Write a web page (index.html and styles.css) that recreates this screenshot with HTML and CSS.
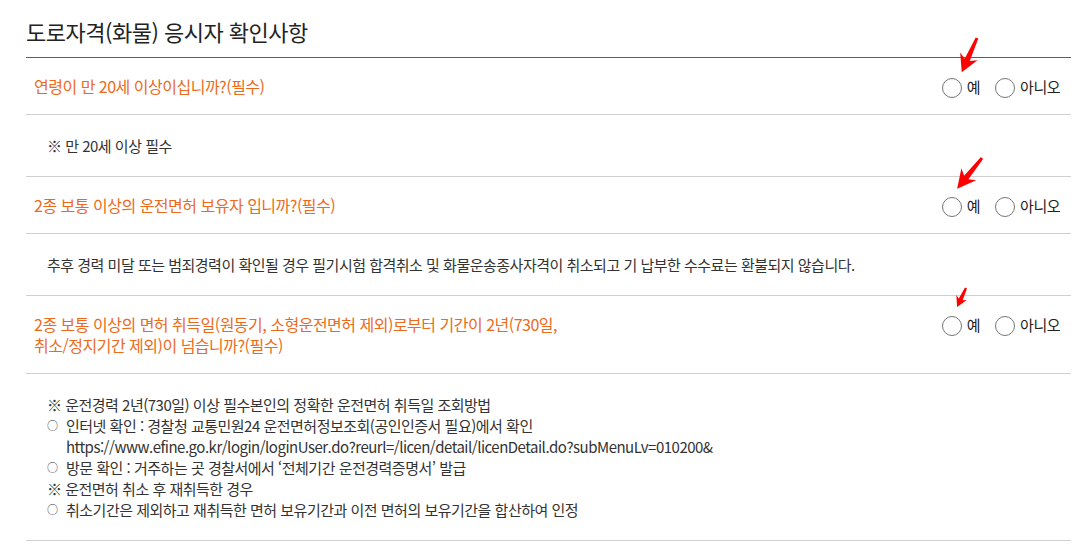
FILE: index.html
```html
<!DOCTYPE html>
<html lang="ko">
<head>
<meta charset="utf-8">
<title>도로자격(화물) 응시자 확인사항</title>
<link rel="stylesheet" href="styles.css">
</head>
<body>
<div class="page">
  <h2 class="title">도로자격(화물) 응시자 확인사항</h2>

  <div class="q-row">
    <p class="q-text">연령이 만 20세 이상이십니까?(필수)</p>
    <div class="choices">
      <label class="choice"><input type="radio" name="q1"><span>예</span></label>
      <label class="choice"><input type="radio" name="q1"><span>아니오</span></label>
    </div>
  </div>
  <div class="note">
    <p>※ 만 20세 이상 필수</p>
  </div>

  <div class="q-row">
    <p class="q-text">2종 보통 이상의 운전면허 보유자 입니까?(필수)</p>
    <div class="choices">
      <label class="choice"><input type="radio" name="q2"><span>예</span></label>
      <label class="choice"><input type="radio" name="q2"><span>아니오</span></label>
    </div>
  </div>
  <div class="note">
    <p>추후 경력 미달 또는 범죄경력이 확인될 경우 필기시험 합격취소 및 화물운송종사자격이 취소되고 기 납부한 수수료는 환불되지 않습니다.</p>
  </div>

  <div class="q-row">
    <p class="q-text">2종 보통 이상의 면허 취득일(원동기, 소형운전면허 제외)로부터 기간이 2년(730일,<br>취소/정지기간 제외)이 넘습니까?(필수)</p>
    <div class="choices">
      <label class="choice"><input type="radio" name="q3"><span>예</span></label>
      <label class="choice"><input type="radio" name="q3"><span>아니오</span></label>
    </div>
  </div>
  <div class="note">
    <p>※ 운전경력 2년(730일) 이상 필수본인의 정확한 운전면허 취득일 조회방법</p>
    <p class="sub"><span class="dot">○</span><span>인터넷 확인 : 경찰청 교통민원24 운전면허정보조회(공인인증서 필요)에서 확인<br>https://www.efine.go.kr/login/loginUser.do?reurl=/licen/detail/licenDetail.do?subMenuLv=010200&amp;</span></p>
    <p class="sub"><span class="dot">○</span><span>방문 확인 : 거주하는 곳 경찰서에서 ‘전체기간 운전경력증명서’ 발급</span></p>
    <p>※ 운전면허 취소 후 재취득한 경우</p>
    <p class="sub"><span class="dot">○</span><span>취소기간은 제외하고 재취득한 면허 보유기간과 이전 면허의 보유기간을 합산하여 인정</span></p>
  </div>

  <svg class="marks" width="1088" height="544" viewBox="0 0 1088 544" aria-hidden="true">
    <g transform="translate(977 38) rotate(24)"><polygon points="-1.4,0 1.4,0 2.8,24 9.5,20 0,37.5 -9.5,20 -2.8,24"/></g>
    <g transform="translate(982 158) rotate(39)"><polygon points="-1.4,0 1.4,0 2.8,25 9.5,21 0,39.5 -9.5,21 -2.8,25"/></g>
    <g transform="translate(966 288) rotate(25)"><polygon points="-1.1,0 1.1,0 2.1,12.5 5.8,10.5 0,21 -5.8,10.5 -2.1,12.5"/></g>
  </svg>
</div>
</body>
</html>
```

FILE: styles.css
```css
html, body {
  margin: 0;
  padding: 0;
  background: #fff;
}

body {
  font-family: "Noto Sans CJK KR", "Noto Sans", sans-serif;
  color: #333;
  letter-spacing: -0.5px;
}

.page {
  position: relative;
  width: 1045px;
  margin-left: 26px;
}

.title {
  margin: 0;
  padding: 17px 0 12px;
  font-size: 22px;
  line-height: 28px;
  font-weight: 400;
  color: #222;
  border-bottom: 1px solid #5e5e5e;
}

.q-row {
  display: flex;
  justify-content: space-between;
  align-items: flex-start;
  padding: 18px 11px 17px 8px;
  border-bottom: 1px solid #d0d0d0;
}

.q-text {
  margin: 0;
  font-size: 16px;
  line-height: 21px;
  color: #ec6a1c;
}

.choices {
  display: flex;
  align-items: center;
  gap: 15px;
  height: 21px;
}

.choice {
  display: flex;
  align-items: center;
  gap: 5px;
  font-size: 15px;
  line-height: 21px;
  color: #222;
}

.choice input {
  appearance: none;
  -webkit-appearance: none;
  margin: 2px 0 0;
  width: 20px;
  height: 20px;
  border: 1px solid #767676;
  border-radius: 50%;
  background: #fff;
}

.note {
  padding: 20px 0 20px 21px;
  border-bottom: 1px solid #d0d0d0;
}

.note p {
  margin: 0;
  font-size: 15px;
  line-height: 21px;
  color: #333;
}

.note .sub {
  display: flex;
}

.note .dot {
  flex: 0 0 19px;
  font-size: 11px;
}

.marks {
  position: absolute;
  left: -26px;
  top: 0;
  pointer-events: none;
  fill: #ff0000;
}
```
